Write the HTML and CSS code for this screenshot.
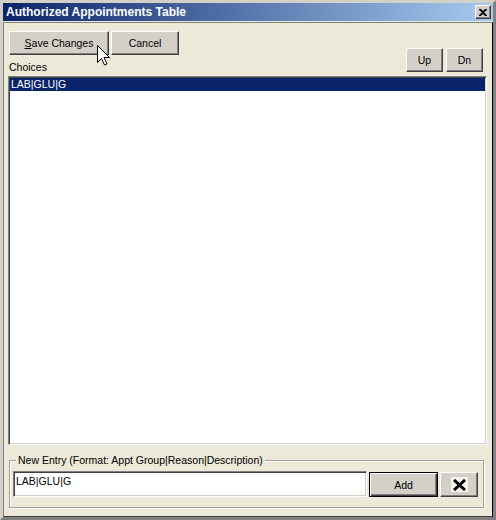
FILE: index.html
```html
<!DOCTYPE html>
<html>
<head>
<meta charset="utf-8">
<link rel="stylesheet" href="styles.css">
</head>
<body>
<div class="window">
  <div class="titlebar">
    <span class="title">Authorized Appointments Table</span>
    <button class="close" aria-label="Close">
      <svg width="8" height="7" viewBox="0 0 8 7"><path d="M0 0h2l2 2 2-2h2v1L5 3.5 8 6v1H6L4 5 2 7H0V6l3-2.5L0 1z" fill="#000"/></svg>
    </button>
  </div>
  <div class="client">
    <div class="header">
      <div class="left">
        <div class="btnrow">
          <button class="btn save"><u>S</u>ave Changes</button>
          <button class="btn cancel">Cancel</button>
        </div>
        <div class="label">Choices</div>
      </div>
      <div class="updn">
        <button class="btn small">Up</button>
        <button class="btn small">Dn</button>
      </div>
    </div>
    <div class="listbox">
      <div class="item selected">LAB|GLU|G</div>
    </div>
    <div class="group">
      <span class="legend">New Entry (Format: Appt Group|Reason|Description)</span>
      <div class="entryrow">
        <div class="input">LAB|GLU|G</div>
        <button class="btn add">Add</button>
        <button class="btn del" aria-label="Delete">
          <span class="delicon">
            <svg width="13" height="12" viewBox="0 0 13 12"><path d="M1 1L12 11M12 1L1 11" stroke="#000" stroke-width="3" fill="none"/></svg>
          </span>
        </button>
      </div>
    </div>
  </div>
  <svg class="cursor" width="13" height="21" viewBox="0 0 13 21"><path d="M0.5 0.5V17.5L4.5 13.5L7.5 20L10 19L7 12.5H12.5Z" fill="#fff" stroke="#000" stroke-width="1" stroke-linejoin="miter"/></svg>
</div>
</body>
</html>
```
FILE: styles.css
```css
html, body {
  margin: 0;
  padding: 0;
  background: #ece9d8;
}
body {
  font-family: "Liberation Sans", Arial, sans-serif;
  font-size: 10.5px;
  color: #000;
}
.window {
  position: relative;
  width: 496px;
  height: 520px;
  box-sizing: border-box;
  border: 3px solid #d4d0c8;
  border-right-color: #808080;
  border-bottom-color: #808080;
  background: #ece9d8;
  display: flex;
  flex-direction: column;
  box-shadow: inset 1px 1px 0 #fff;
}
.titlebar {
  height: 18px;
  flex: none;
  display: flex;
  align-items: center;
  background: linear-gradient(to right, #0a246a, #a6caf0);
  padding-left: 3px;
}
.title {
  flex: 1;
  color: #fff;
  font-weight: bold;
  font-size: 12px;
  line-height: 18px;
}
.close {
  width: 16px;
  height: 14px;
  margin-right: 2px;
  padding: 0;
  background: #d4d0c8;
  border: 1px solid;
  border-color: #fff #404040 #404040 #fff;
  box-shadow: inset -1px -1px 0 #808080;
  display: flex;
  align-items: center;
  justify-content: center;
}
.client {
  flex: 1;
  margin-top: 1px;
  border: 1px solid;
  border-color: #808080 #000 #404040 #808080;
  padding: 8px 5px 8px 4px;
  display: flex;
  flex-direction: column;
  min-height: 0;
}
.header {
  display: flex;
  justify-content: space-between;
  flex: none;
}
.left {
  display: flex;
  flex-direction: column;
  margin-left: 1px;
}
.btnrow {
  display: flex;
  gap: 2px;
}
.btn {
  font-family: "Liberation Sans", Arial, sans-serif;
  font-size: 10.5px;
  color: #000;
  background: #d4d0c8;
  border: 1px solid;
  border-color: #fff #404040 #404040 #fff;
  box-shadow: inset -1px -1px 0 #808080;
  padding: 0;
  height: 24px;
  display: flex;
  align-items: center;
  justify-content: center;
}
.save { width: 100px; }
.cancel { width: 68px; }
.label {
  margin-top: 6px;
  line-height: 13px;
  margin-bottom: 2px;
}
.updn {
  display: flex;
  gap: 3px;
  margin-top: 17px;
  margin-right: 4px;
}
.small { width: 37px; }
.listbox {
  flex: 1;
  background: #fff;
  border: 1px solid;
  border-color: #808080 #fff #fff #808080;
  box-shadow: inset 1px 1px 0 #404040, inset -1px -1px 0 #d4d0c8;
  padding: 1px;
  min-height: 0;
}
.item {
  line-height: 13px;
  padding-left: 1px;
}
.selected {
  background: #0a246a;
  color: #fff;
}
.group {
  position: relative;
  flex: none;
  box-sizing: border-box;
  height: 48px;
  margin: 15px 3px 0 1px;
  border: 1px solid #a0a0a0;
  box-shadow: inset 1px 1px 0 #fff, 1px 1px 0 #fff;
  padding: 10px 5px 0 3px;
}
.legend {
  position: absolute;
  top: -7px;
  left: 6px;
  padding: 0 2px;
  background: #ece9d8;
  line-height: 13px;
}
.entryrow {
  display: flex;
  align-items: flex-start;
}
.input {
  box-sizing: border-box;
  width: 354px;
  height: 26px;
  background: #fff;
  border: 1px solid;
  border-color: #808080 #fff #fff #808080;
  box-shadow: inset 1px 1px 0 #404040, inset -1px -1px 0 #d4d0c8;
  padding: 3px 2px;
  line-height: 13px;
}
.add {
  box-sizing: border-box;
  width: 69px;
  height: 25px;
  margin: 1px 0 0 2px;
  border: 1px solid #000;
  box-shadow: inset 1px 1px 0 #fff, inset -1px -1px 0 #404040, inset -2px -2px 0 #808080;
}
.del {
  box-sizing: border-box;
  width: 38px;
  height: 25px;
  margin: 1px 0 0 2px;
}
.delicon {
  width: 17px;
  height: 15px;
  background: #f4f3ee;
  display: flex;
  align-items: center;
  justify-content: center;
}
.cursor {
  position: absolute;
  left: 94px;
  top: 42px;
}
```
